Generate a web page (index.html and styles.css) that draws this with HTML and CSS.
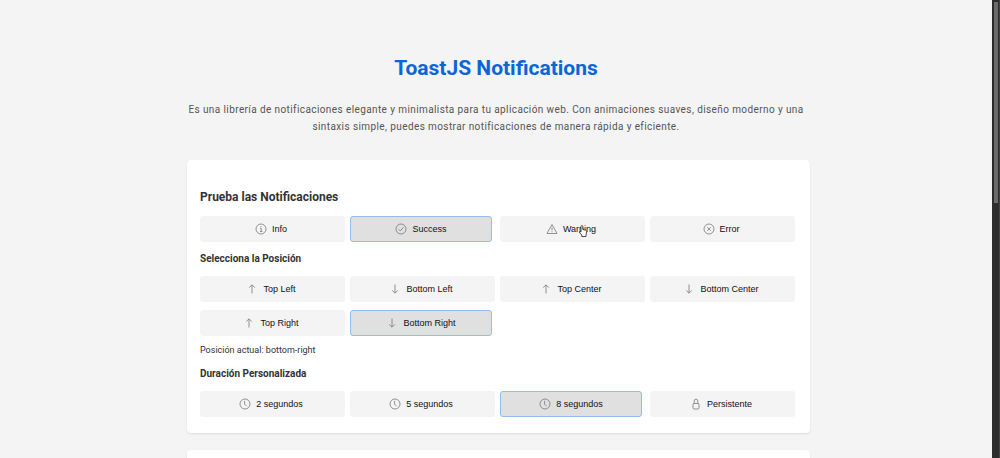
FILE: index.html
```html
<!DOCTYPE html>
<html lang="es">
<head>
<meta charset="utf-8">
<meta name="viewport" content="width=device-width, initial-scale=1">
<title>ToastJS Notifications</title>
<link rel="stylesheet" href="styles.css">
</head>
<body>
<svg class="sprite" aria-hidden="true">
  <symbol id="info" viewBox="0 0 12 12"><circle cx="6" cy="6" r="5"/><path d="M5 5.2h1.2v3.3M5 8.5h2.4M6 3v.8"/></symbol>
  <symbol id="check" viewBox="0 0 12 12"><circle cx="6" cy="6" r="5"/><path d="M3.6 6.2l1.7 1.7 3.2-3.6"/></symbol>
  <symbol id="warn" viewBox="0 0 12 12"><path d="M6 1.5L11 10.5H1zM6 4.5v3M6 8.4v.9"/></symbol>
  <symbol id="cross" viewBox="0 0 12 12"><circle cx="6" cy="6" r="5"/><path d="M4.2 4.2l3.6 3.6M7.8 4.2L4.2 7.8"/></symbol>
  <symbol id="up" viewBox="0 0 12 12"><path d="M6 10.5V2M3.2 4.6L6 1.8l2.8 2.8"/></symbol>
  <symbol id="down" viewBox="0 0 12 12"><path d="M6 1.5V10M3.2 7.4L6 10.2l2.8-2.8"/></symbol>
  <symbol id="clock" viewBox="0 0 12 12"><circle cx="6" cy="6" r="5"/><path d="M5.6 2.8v3.4l2 2"/></symbol>
  <symbol id="lock" viewBox="0 0 12 12"><rect x="3" y="5.5" width="6" height="5.5" rx="1"/><path d="M4.2 5.500V3a1.800 1.800 0 0 1 3.600 0v2.500"/></symbol>
</svg>
<main class="page">
  <header class="intro">
    <h1 class="title">ToastJS Notifications</h1>
    <p class="lead">Es una librería de notificaciones elegante y minimalista para tu aplicación web. Con animaciones suaves, diseño moderno y una sintaxis simple, puedes mostrar notificaciones de manera rápida y eficiente.</p>
  </header>
  <section class="card">
    <h2 class="card-title">Prueba las Notificaciones</h2>
    <div class="grid">
      <button class="btn" type="button"><svg class="icon"><use href="#info"/></svg>Info</button>
      <button class="btn active" type="button"><svg class="icon"><use href="#check"/></svg>Success</button>
      <button class="btn" type="button"><svg class="icon"><use href="#warn"/></svg>Warning
        <svg class="pointer" viewBox="0 0 10 12" aria-hidden="true"><path d="M3 6V1.500a.9.9 0 0 1 1.800 0V4.500l3 .7q1 .3.8 1.500L8 10v1.500H3.800V10L1 7q.6-1.300 2 0z"/></svg></button>
      <button class="btn" type="button"><svg class="icon"><use href="#cross"/></svg>Error</button>
    </div>
    <h3 class="subtitle">Selecciona la Posición</h3>
    <div class="grid">
      <button class="btn" type="button"><svg class="icon"><use href="#up"/></svg>Top Left</button>
      <button class="btn" type="button"><svg class="icon"><use href="#down"/></svg>Bottom Left</button>
      <button class="btn" type="button"><svg class="icon"><use href="#up"/></svg>Top Center</button>
      <button class="btn" type="button"><svg class="icon"><use href="#down"/></svg>Bottom Center</button>
      <button class="btn" type="button"><svg class="icon"><use href="#up"/></svg>Top Right</button>
      <button class="btn active" type="button"><svg class="icon"><use href="#down"/></svg>Bottom Right</button>
    </div>
    <p class="status">Posición actual: bottom-right</p>
    <h3 class="subtitle">Duración Personalizada</h3>
    <div class="grid">
      <button class="btn" type="button"><svg class="icon"><use href="#clock"/></svg>2 segundos</button>
      <button class="btn" type="button"><svg class="icon"><use href="#clock"/></svg>5 segundos</button>
      <button class="btn active" type="button"><svg class="icon"><use href="#clock"/></svg>8 segundos</button>
      <button class="btn" type="button"><svg class="icon"><use href="#lock"/></svg>Persistente</button>
    </div>
  </section>
  <section class="card next"></section>
</main>
<div class="scrollbar" aria-hidden="true"><div class="thumb"></div></div>
</body>
</html>
```
FILE: styles.css
```css
* { box-sizing: border-box; }
html { height: 100%; }
body {
  height: 100%;
  margin: 0;
  padding-right: 8px;
  overflow: hidden;
  background: #f4f4f4;
  color: #333;
  font-family: Roboto, sans-serif;
}
h1, h2, h3, p { margin: 0; }
.sprite { position: absolute; width: 0; height: 0; }
.page {
  display: flex;
  flex-direction: column;
  gap: 17px;
  height: 100%;
  max-width: 624px;
  margin: 0 auto;
  padding-top: 52px;
}
.intro {
  padding-bottom: 8px;
  text-align: center;
}
.title {
  color: #0a66d8;
  font-size: 21px;
  line-height: 32px;
  font-weight: 700;
}
.lead {
  margin-top: 17px;
  color: #555;
  font-size: 10px;
  line-height: 17px;
  letter-spacing: 0.04em;
}
.card {
  margin: 0 -2px 0 3px;
  padding: 28px 18px 16px 13px;
  border-radius: 4px;
  background: #fff;
  box-shadow: 0 1px 2px #0000001a;
}
.next {
  flex: 1;
  padding: 0;
  border-radius: 4px 4px 0 0;
}
.card-title {
  font-size: 12px;
  line-height: 18px;
}
.grid {
  display: grid;
  grid-template-columns: repeat(4, 1fr);
  gap: 8px;
  margin-top: 10px;
}
.btn {
  position: relative;
  display: flex;
  align-items: center;
  justify-content: center;
  gap: 5px;
  height: 26px;
  padding: 0 0 1px;
  border: 1px solid #f4f4f4;
  border-radius: 3px;
  background: #f4f4f4;
  box-shadow: 3px 0 0 #f4f4f4;
  color: #111;
  font: 9px/12px "Liberation Sans", sans-serif;
}
.active {
  border-color: #93bdea;
  background: #e0e0e0;
  box-shadow: none;
}
.icon {
  width: 12px;
  height: 12px;
  fill: none;
  stroke: #777;
  stroke-width: 0.8;
}
.pointer {
  position: absolute;
  left: 77px;
  top: 8px;
  width: 10px;
  height: 12px;
  fill: #fff;
  stroke: #222;
  stroke-width: 0.8;
}
.subtitle {
  margin-top: 10px;
  font-size: 10px;
  line-height: 14px;
}
.status {
  margin-top: 7px;
  font-size: 9px;
  line-height: 14px;
}
.scrollbar {
  position: fixed;
  inset: 0 0 0 auto;
  width: 8px;
  padding: 2px 2px 0;
  border-right: 1px solid #444;
  background: #2d2d2d;
}
.thumb {
  width: 4px;
  height: 44%;
  background: #6c6c6c;
}
```
